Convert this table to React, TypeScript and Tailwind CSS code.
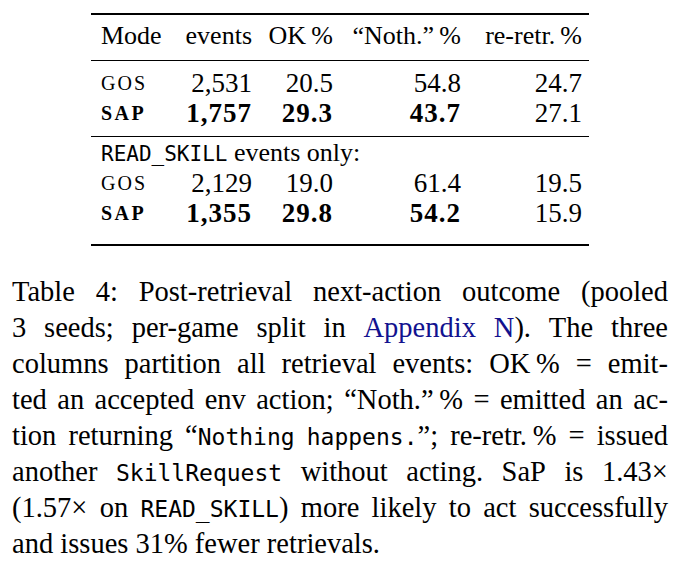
import type { ReactNode } from 'react';

const serif = "[font-family:'Liberation_Serif',serif]";
const mono = "[font-family:'DejaVu_Sans_Mono',monospace]";

type TableRow = { mode: string; vals: string[]; bold: number[]; modeBold?: boolean };

const groupA: TableRow[] = [
    { mode: 'GOS', vals: ['2,531', '20.5', '54.8', '24.7'], bold: [] },
    { mode: 'SAP', vals: ['1,757', '29.3', '43.7', '27.1'], bold: [0, 1, 2], modeBold: true },
];

const groupB: TableRow[] = [
    { mode: 'GOS', vals: ['2,129', '19.0', '61.4', '19.5'], bold: [] },
    { mode: 'SAP', vals: ['1,355', '29.8', '54.2', '15.9'], bold: [0, 1, 2], modeBold: true },
];

const cols = 'grid grid-cols-[78px_90px_81px_128px_121px]';

function DataRow({ row }: { row: TableRow }) {
    return (
        <div className={`${cols} h-[30px] leading-[30px] text-[27px]`}>
            <div className={`pl-[10px] text-[20px] ${row.modeBold ? 'font-bold tracking-[2.5px]' : 'tracking-[2px]'}`}>
                {row.mode}
            </div>
            {row.vals.map((v, i) => (
                <div
                    key={i}
                    className={`text-right pr-[7px] ${row.bold.includes(i) ? 'font-bold tracking-[1px]' : ''}`}
                >
                    {v}
                </div>
            ))}
        </div>
    );
}

function Mono({ children }: { children: ReactNode }) {
    return <span className={`${mono} text-[23px]`}>{children}</span>;
}

// one justified caption line: words spread edge to edge
function Line({ words }: { words: ReactNode[] }) {
    return (
        <div className="flex justify-between items-baseline h-[36px] leading-[36px]">
            {words.map((w, i) => (
                <span key={i} className="whitespace-nowrap">{w}</span>
            ))}
        </div>
    );
}

const blue = 'text-[#12128f]';

const lines: ReactNode[][] = [
    ['Table', '4:', 'Post-retrieval', 'next-action', 'outcome', '(pooled'],
    ['3', 'seeds;', 'per-game', 'split', 'in', <span className={blue}>Appendix</span>, <><span className={blue}>N</span>).</>, 'The', 'three'],
    ['columns', 'partition', 'all', 'retrieval', 'events:', 'OK\u2009%', '=', 'emit-'],
    ['ted', 'an', 'accepted', 'env', 'action;', '\u201CNoth.\u201D\u2009%', '=', 'emitted', 'an', 'ac-'],
    ['tion', 'returning', <>{'\u201C'}<Mono>Nothing</Mono></>, <><Mono>happens.</Mono>{'\u201D;'}</>, 're-retr.\u2009%', '=', 'issued'],
    ['another', <Mono>SkillRequest</Mono>, 'without', 'acting.', 'SaP', 'is', '1.43\u00D7'],
    ['(1.57\u00D7', 'on', <><Mono>READ_SKILL</Mono>)</>, 'more', 'likely', 'to', 'act', 'successfully'],
];

export default function App() {
    return (
        <div className={`${serif} bg-white text-black w-[686px] h-[572px] pt-[13px] pl-[12px]`}>
            <div className="w-[656px]">
                <div className="w-[498px] mx-auto">
                    <div className="h-[2px] bg-black" />
                    <div className={`${cols} mt-[6px] h-[30px] leading-[30px] text-[26px]`}>
                        <div className="pl-[10px]">Mode</div>
                        <div className="text-right pr-[7px]">events</div>
                        <div className="text-right pr-[7px]">OK&thinsp;%</div>
                        <div className="text-right pr-[7px]">&ldquo;Noth.&rdquo;&thinsp;%</div>
                        <div className="text-right pr-[7px]">re-retr.&thinsp;%</div>
                    </div>
                    <div className="h-px bg-black mt-[9px]" />
                    <div className="mt-[7px]">
                        {groupA.map((r) => <DataRow key={r.mode} row={r} />)}
                    </div>
                    <div className="h-px bg-black mt-[8px]" />
                    <div className="mt-[1px] h-[30px] leading-[30px] pl-[10px] text-[26px]">
                        <span className={`${mono} text-[21px]`}>READ_SKILL</span> events only:
                    </div>
                    {groupB.map((r) => <DataRow key={r.mode} row={r} />)}
                    <div className="h-[2px] bg-black mt-[16px]" />
                </div>

                <div className="mt-[28px] text-[28.5px]">
                    {lines.map((words, i) => (
                        <Line key={i} words={words} />
                    ))}
                    <div className="h-[36px] leading-[36px]">and issues 31% fewer retrievals.</div>
                </div>
            </div>
        </div>
    );
}
